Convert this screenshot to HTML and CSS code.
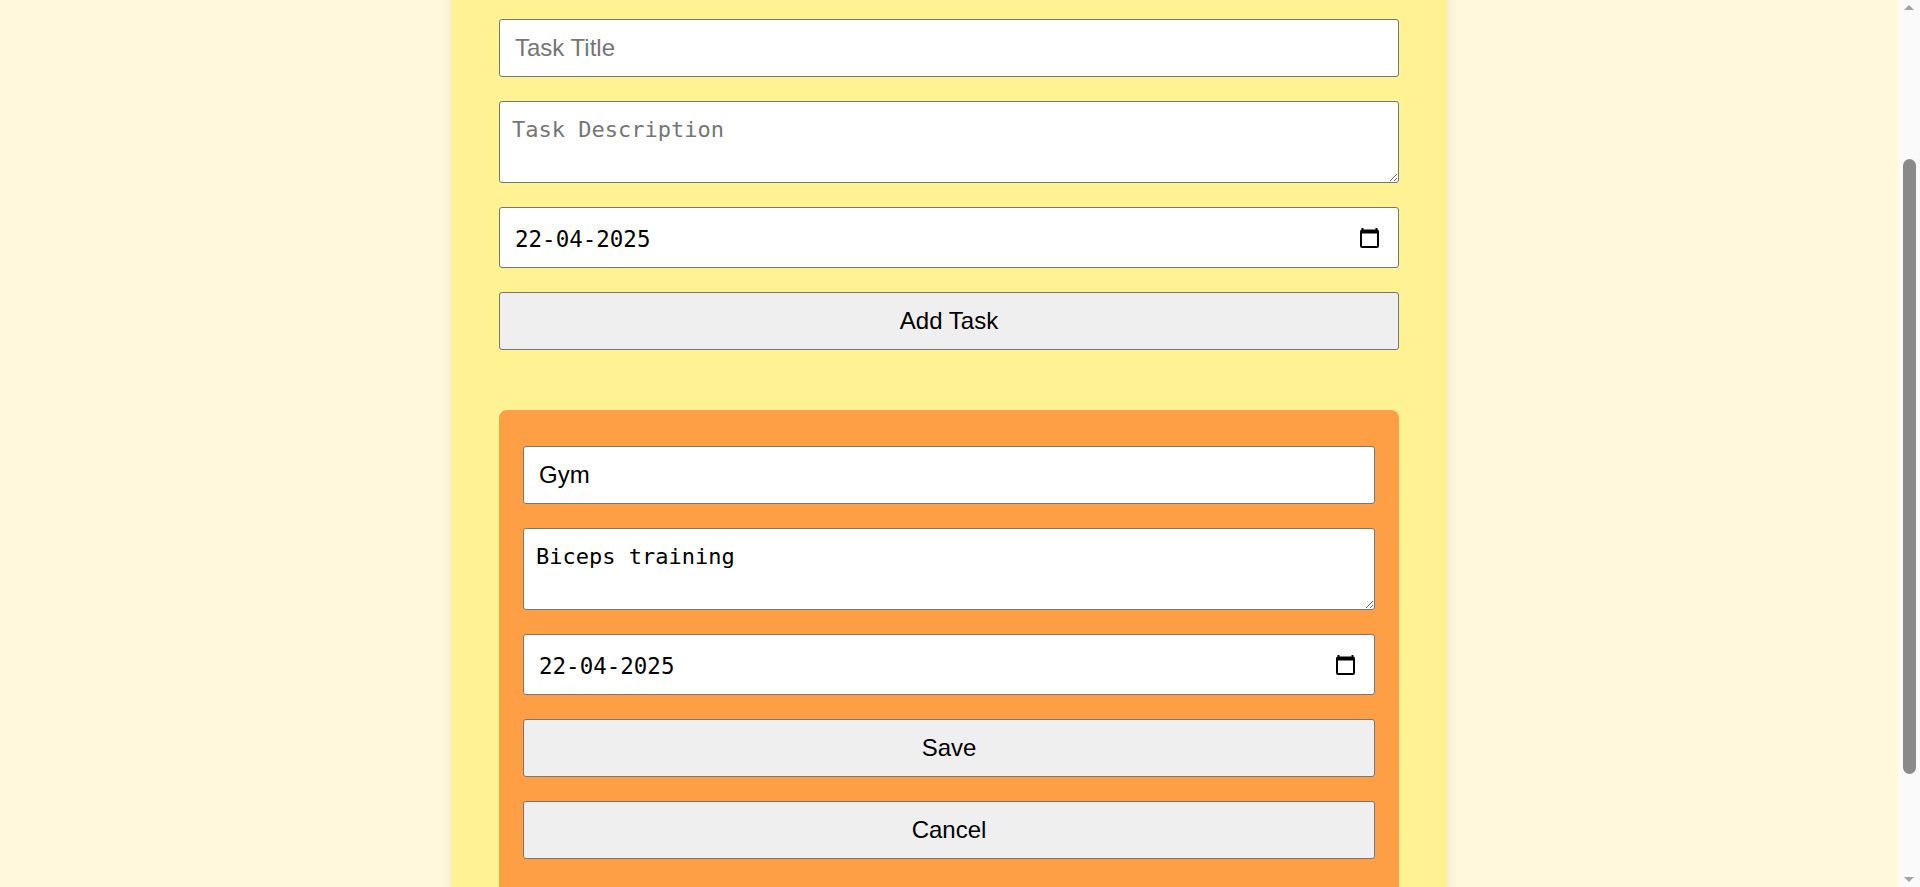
FILE: index.html
```html
<!DOCTYPE html>
<html lang="en">
<head>
<meta charset="utf-8">
<title>Task Manager</title>
<link rel="stylesheet" href="styles.css">
</head>
<body>
<main class="app">
  <form class="task-form">
    <input class="field" type="text" placeholder="Task Title">
    <textarea class="field field-area" placeholder="Task Description"></textarea>
    <div class="field field-date">
      <span class="date-text">22-04-2025</span>
      <svg class="cal-icon" width="19" height="20" viewBox="0 0 19 20" aria-hidden="true">
        <rect x="1.5" y="0" width="2" height="3" fill="#000"/>
        <rect x="15.5" y="0" width="2" height="3" fill="#000"/>
        <path fill="#000" fill-rule="evenodd" d="M2 1.5h15a2 2 0 0 1 2 2V18a2 2 0 0 1-2 2H2a2 2 0 0 1-2-2V3.5a2 2 0 0 1 2-2zM2 5.5V18h15V5.5z"/>
      </svg>
    </div>
    <button class="btn" type="button">Add Task</button>
  </form>

  <section class="task-list">
    <form class="task-card">
      <input class="field" type="text" value="Gym">
      <textarea class="field field-area">Biceps training</textarea>
      <div class="field field-date">
        <span class="date-text">22-04-2025</span>
        <svg class="cal-icon" width="19" height="20" viewBox="0 0 19 20" aria-hidden="true">
          <rect x="1.5" y="0" width="2" height="3" fill="#000"/>
          <rect x="15.5" y="0" width="2" height="3" fill="#000"/>
          <path fill="#000" fill-rule="evenodd" d="M2 1.5h15a2 2 0 0 1 2 2V18a2 2 0 0 1-2 2H2a2 2 0 0 1-2-2V3.5a2 2 0 0 1 2-2zM2 5.5V18h15V5.5z"/>
        </svg>
      </div>
      <button class="btn" type="button">Save</button>
      <button class="btn" type="button">Cancel</button>
    </form>
  </section>
</main>

<div class="scrollbar" aria-hidden="true">
  <span class="scroll-arrow scroll-arrow-up"></span>
  <span class="scroll-track"><span class="scroll-thumb"></span></span>
  <span class="scroll-arrow scroll-arrow-down"></span>
</div>

<script src="script.js"></script>
</body>
</html>
```

FILE: styles.css
```css
* {
  box-sizing: border-box;
}

html {
  background: #fff8dc;
}

body {
  margin: 0;
  padding-right: 22px;
  background: #fff8dc;
  font-family: "Liberation Sans", Arial, sans-serif;
  color: #000;
}

.app {
  width: 996px;
  margin: 40px auto;
  padding: 184px 48px 91px;
  background: #fff293;
  box-shadow: 0 0 12px rgba(0, 0, 0, 0.08);
}

.task-form {
  display: flex;
  flex-direction: column;
  gap: 24px;
  margin: 0 0 60px;
}

.field {
  display: block;
  width: 100%;
  height: 58px;
  margin: 0;
  padding: 0 15px;
  border: 1px solid #767676;
  border-radius: 3px;
  background: #fff;
  color: #000;
  font-family: "Liberation Sans", Arial, sans-serif;
  font-size: 24px;
}

.field::placeholder {
  color: #757575;
}

.field-area {
  height: 82px;
  padding: 15px 12px;
  font-family: "DejaVu Sans Mono", "Liberation Mono", monospace;
  font-size: 22px;
  resize: vertical;
}

.field-date {
  display: flex;
  align-items: center;
  justify-content: space-between;
  height: 61px;
  padding: 0 19px 0 15px;
  font-family: "DejaVu Sans Mono", "Liberation Mono", monospace;
  font-size: 22.5px;
}

.date-text {
  padding-top: 2px;
}

.cal-icon {
  display: block;
  flex: none;
}

.btn {
  display: block;
  width: 100%;
  height: 58px;
  margin: 0;
  border: 1px solid #767676;
  border-radius: 3px;
  background: #efefef;
  color: #000;
  font-family: "Liberation Sans", Arial, sans-serif;
  font-size: 24px;
}

.task-card {
  display: flex;
  flex-direction: column;
  gap: 24px;
  padding: 36px 24px;
  background: #ff9f45;
  border-radius: 8px;
}

/* browser scrollbar as seen in the reference */
.scrollbar {
  position: fixed;
  top: 0;
  right: 0;
  bottom: 0;
  width: 22px;
  display: flex;
  flex-direction: column;
  align-items: center;
  background: #fafafa;
}

.scroll-arrow {
  flex: none;
  width: 22px;
  height: 17px;
  display: flex;
  justify-content: center;
}

.scroll-arrow-up::before,
.scroll-arrow-down::before {
  content: "";
  width: 0;
  height: 0;
  border-left: 5px solid transparent;
  border-right: 5px solid transparent;
}

.scroll-arrow-up {
  align-items: flex-start;
  padding-top: 5px;
}

.scroll-arrow-up::before {
  border-bottom: 5px solid #a3a3a3;
}

.scroll-arrow-down {
  align-items: flex-end;
  padding-bottom: 5px;
}

.scroll-arrow-down::before {
  border-top: 5px solid #a3a3a3;
}

.scroll-track {
  flex: 1;
  width: 100%;
  display: flex;
  justify-content: center;
  padding-top: 142px;
}

.scroll-thumb {
  width: 13px;
  height: 615px;
  border-radius: 7px;
  background: #8a8a8a;
}
```

FILE: script.js
```js
window.scrollTo(0, 205);
window.addEventListener('load', function () {
  window.scrollTo(0, 205);
});
```
